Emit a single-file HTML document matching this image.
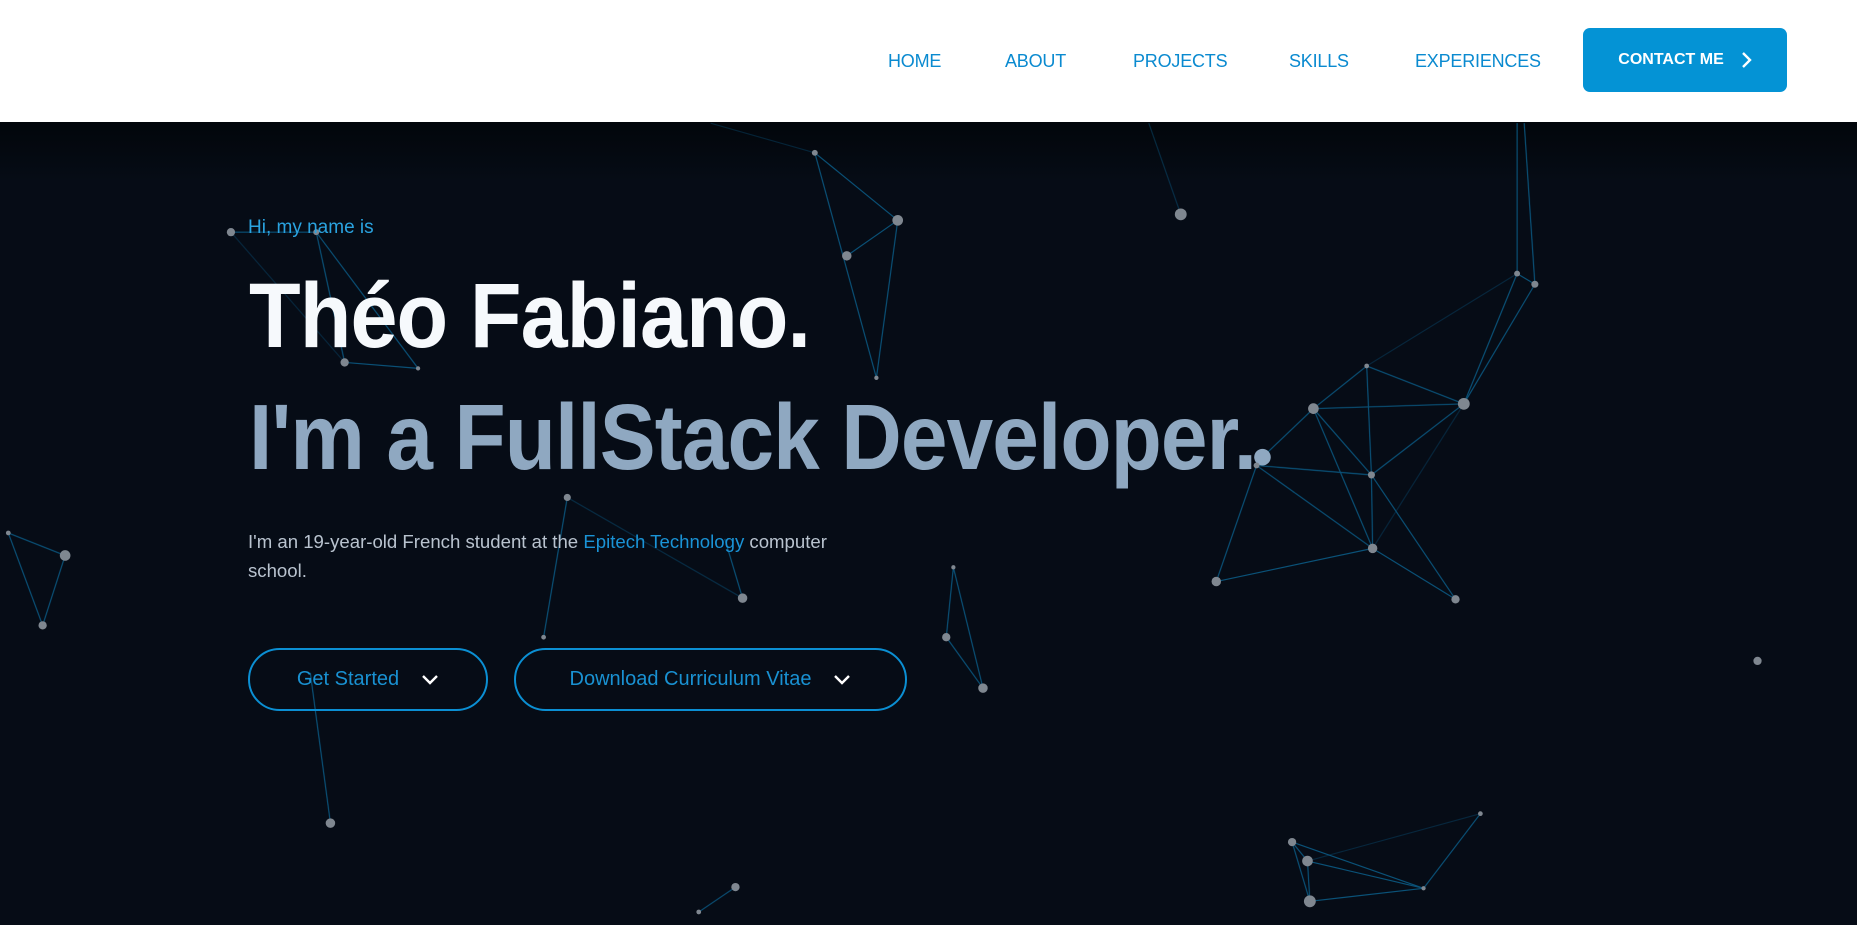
<!DOCTYPE html>
<html><head><meta charset="utf-8"><style>
*{margin:0;padding:0;box-sizing:border-box}
html,body{width:1857px;height:925px;overflow:hidden;background:#060c16;font-family:"Liberation Sans",sans-serif}
.nav{position:absolute;left:0;top:0;width:1857px;height:122px;background:#fff;z-index:3}
.nav a{position:absolute;top:51px;font-size:18px;color:#0a8ad0;text-decoration:none;letter-spacing:-0.2px}
.cbtn{position:absolute;left:1583px;top:28px;width:204px;height:64px;background:#0493d5;border-radius:7px;color:#fff;font-size:16px;font-weight:bold;display:flex;align-items:center;justify-content:center;gap:16px}
.hero{position:absolute;left:0;top:122px;width:1857px;height:803px;background:linear-gradient(#02060b 0,#060c16 60px,#060c16 100%)}
svg.bg{position:absolute;left:0;top:0;width:1857px;height:925px;z-index:1}
.c{position:absolute;z-index:2;white-space:nowrap}
.hi{left:248px;top:217px;color:#2aa3e0;font-size:19px}
.name{left:249px;top:264px;color:#f6f9fc;font-size:92px;font-weight:bold;letter-spacing:-1px;transform:scaleX(0.919);transform-origin:0 0}
.dev{left:249px;top:384px;color:#8fa8c1;font-size:93px;font-weight:bold;letter-spacing:-1px;transform:scaleX(0.901);transform-origin:0 0}
.p{left:248px;top:527px;width:620px;white-space:normal;color:#b9c3cf;font-size:18.6px;line-height:29px}
.p span{color:#1a93d6}
.btn{position:absolute;z-index:2;top:648px;height:63px;border:2px solid #0b8fd3;border-radius:32px;color:#1991d2;font-size:20px;display:flex;align-items:center;justify-content:center;gap:22px}
</style></head><body>
<div class="nav">
<a style="left:888px">HOME</a><a style="left:1005px">ABOUT</a><a style="left:1133px">PROJECTS</a><a style="left:1289px">SKILLS</a><a style="left:1415px">EXPERIENCES</a>
<div class="cbtn">CONTACT ME <svg width="12" height="18" viewBox="0 0 12 18"><path d="M3 2l7 7-7 7" stroke="#fff" stroke-width="2.4" fill="none"/></svg></div>
</div>
<div class="hero"></div>
<svg class="bg" viewBox="0 0 1568 781" preserveAspectRatio="none">
<g stroke="#0d6a9a" stroke-width="1" opacity="0.75" fill="none">
<line x1="195" y1="196" x2="267" y2="196"/><line x1="267" y1="196" x2="291" y2="306"/><line x1="267" y1="196" x2="353" y2="311"/><line x1="291" y1="306" x2="353" y2="311"/><line x1="195" y1="196" x2="291" y2="306" opacity=".4"/>
<line x1="688" y1="129" x2="758" y2="186"/><line x1="758" y1="186" x2="715" y2="216"/><line x1="688" y1="129" x2="740" y2="319"/><line x1="758" y1="186" x2="740" y2="319"/><line x1="688" y1="129" x2="600" y2="104" opacity=".4"/>
<line x1="970" y1="104" x2="997" y2="181" opacity=".5"/>
<line x1="479" y1="420" x2="627" y2="505" opacity=".5"/><line x1="479" y1="420" x2="459" y2="538"/><line x1="612" y1="455" x2="627" y2="505"/>
<line x1="805" y1="479" x2="799" y2="538"/><line x1="799" y1="538" x2="830" y2="581"/><line x1="805" y1="479" x2="830" y2="581"/>
<line x1="7" y1="450" x2="55" y2="469"/><line x1="55" y1="469" x2="36" y2="528"/><line x1="7" y1="450" x2="36" y2="528"/>
<line x1="279" y1="695" x2="262" y2="568"/><line x1="621" y1="749" x2="590" y2="770"/>
<line x1="1109" y1="345" x2="1154" y2="309"/><line x1="1109" y1="345" x2="1236" y2="341"/><line x1="1154" y1="309" x2="1236" y2="341"/><line x1="1154" y1="309" x2="1158" y2="401"/><line x1="1109" y1="345" x2="1158" y2="401"/><line x1="1109" y1="345" x2="1159" y2="463"/><line x1="1066" y1="386" x2="1109" y2="345"/><line x1="1061" y1="393" x2="1158" y2="401"/><line x1="1061" y1="393" x2="1159" y2="463"/><line x1="1061" y1="393" x2="1027" y2="491"/><line x1="1158" y1="401" x2="1236" y2="341"/><line x1="1159" y1="463" x2="1236" y2="341" opacity=".4"/><line x1="1236" y1="341" x2="1296" y2="240"/><line x1="1236" y1="341" x2="1281" y2="231"/><line x1="1154" y1="309" x2="1281" y2="231" opacity=".4"/><line x1="1281" y1="231" x2="1296" y2="240"/><line x1="1281" y1="231" x2="1281" y2="104"/><line x1="1296" y1="240" x2="1287" y2="104"/><line x1="1158" y1="401" x2="1159" y2="463"/><line x1="1159" y1="463" x2="1229" y2="506"/><line x1="1158" y1="401" x2="1229" y2="506"/><line x1="1027" y1="491" x2="1159" y2="463"/>
<line x1="1091" y1="711" x2="1104" y2="727"/><line x1="1091" y1="711" x2="1106" y2="761"/><line x1="1104" y1="727" x2="1106" y2="761"/><line x1="1104" y1="727" x2="1202" y2="750"/><line x1="1106" y1="761" x2="1202" y2="750"/><line x1="1202" y1="750" x2="1250" y2="687"/><line x1="1091" y1="711" x2="1202" y2="750"/><line x1="1104" y1="727" x2="1250" y2="687" opacity=".4"/>
</g>
<g fill="#7f8790">
<circle cx="195" cy="196" r="3.5"/><circle cx="267" cy="196" r="2.5"/><circle cx="291" cy="306" r="3.5"/><circle cx="353" cy="311" r="1.8"/>
<circle cx="688" cy="129" r="2.5"/><circle cx="758" cy="186" r="4.5"/><circle cx="715" cy="216" r="4"/><circle cx="740" cy="319" r="1.8"/><circle cx="997" cy="181" r="5"/>
<circle cx="1281" cy="231" r="2.5"/><circle cx="1296" cy="240" r="3"/><circle cx="1236" cy="341" r="5"/><circle cx="1154" cy="309" r="2"/><circle cx="1109" cy="345" r="4.5"/><circle cx="1066" cy="386" r="7" fill="#8fa8c1"/><circle cx="1061" cy="393" r="2.5"/><circle cx="1158" cy="401" r="3"/><circle cx="1159" cy="463" r="4"/><circle cx="1027" cy="491" r="4"/><circle cx="1229" cy="506" r="3.5"/>
<circle cx="479" cy="420" r="3"/><circle cx="459" cy="538" r="2"/><circle cx="627" cy="505" r="4"/><circle cx="805" cy="479" r="1.8"/><circle cx="799" cy="538" r="3.5"/><circle cx="830" cy="581" r="4"/>
<circle cx="7" cy="450" r="2"/><circle cx="55" cy="469" r="4.5"/><circle cx="36" cy="528" r="3.5"/><circle cx="1484" cy="558" r="3.5"/><circle cx="279" cy="695" r="4"/><circle cx="621" cy="749" r="3.5"/><circle cx="590" cy="770" r="2"/>
<circle cx="1091" cy="711" r="3.5"/><circle cx="1104" cy="727" r="4.5"/><circle cx="1106" cy="761" r="5"/><circle cx="1202" cy="750" r="1.8"/><circle cx="1250" cy="687" r="2"/>
</g>
</svg>
<div class="c hi">Hi, my name is</div>
<div class="c name">Théo Fabiano.</div>
<div class="c dev">I'm a FullStack Developer.</div>
<div class="c p">I'm an 19-year-old French student at the <span>Epitech Technology</span> computer school.</div>
<div class="btn" style="left:248px;width:240px">Get Started <svg width="18" height="12" viewBox="0 0 18 12"><path d="M2 2l7 7 7-7" stroke="#fff" stroke-width="2.4" fill="none"/></svg></div>
<div class="btn" style="left:514px;width:393px">Download Curriculum Vitae <svg width="18" height="12" viewBox="0 0 18 12"><path d="M2 2l7 7 7-7" stroke="#fff" stroke-width="2.4" fill="none"/></svg></div>
</body></html>
